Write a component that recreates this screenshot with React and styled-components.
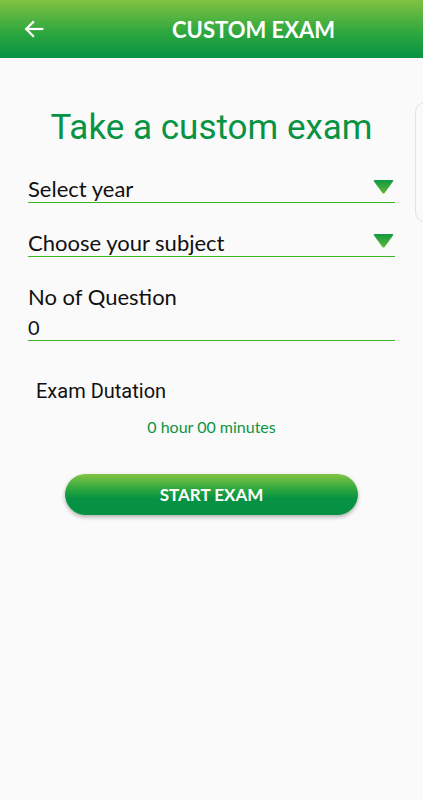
import styled, { createGlobalStyle } from "styled-components";

const GlobalStyle = createGlobalStyle`
  html, body {
    margin: 0;
    padding: 0;
    background: #fafafa;
  }
  body {
    font-family: Lato, "Noto Sans", sans-serif;
  }
`;

const Page = styled.div`
  position: relative;
  width: 423px;
  min-height: 800px;
  background: #fafafa;
  overflow: hidden;
`;

const Toolbar = styled.header`
  height: 58px;
  display: flex;
  align-items: center;
  background: linear-gradient(to bottom, #80c241 0%, #2fa83f 55%, #069243 100%);
  color: #fff;
  padding: 0 0 0 22px;
`;

const BackButton = styled.button`
  border: 0;
  background: none;
  padding: 0;
  width: 24px;
  height: 24px;
  display: flex;
  align-items: center;
  justify-content: center;
  color: #fff;
`;

const ToolbarTitle = styled.h1`
  margin: 0 0 0 126px;
  font-family: Lato, sans-serif;
  font-weight: 700;
  font-size: 22px;
  color: #fff;
`;

const Content = styled.main`
  padding: 50px 28px 0 28px;
  display: flex;
  flex-direction: column;
`;

const Heading = styled.h2`
  margin: 0 0 20px;
  text-align: center;
  font-family: Roboto, sans-serif;
  font-weight: 400;
  font-size: 35px;
  line-height: 40px;
  color: #089344;
`;

const Select = styled.div`
  display: flex;
  align-items: flex-end;
  justify-content: space-between;
  height: 34px;
  border-bottom: 1px solid #3cb521;
  margin-bottom: 19px;
  font-size: 22px;
  color: #111;
`;

const SelectText = styled.span`
  line-height: 26px;
`;

const Caret = styled.svg`
  width: 21px;
  height: 14px;
  margin: 0 1px 8px 0;
`;

const FieldLabel = styled.div`
  font-size: 22px;
  line-height: 24px;
  color: #111;
  margin-top: 9px;
`;

const NumberInput = styled.div`
  font-size: 20px;
  line-height: 22px;
  padding-top: 7px;
  border-bottom: 1px solid #3cb521;
  color: #111;
  padding-bottom: 2px;
`;

const DurationLabel = styled.div`
  font-family: Roboto, sans-serif;
  font-size: 20px;
  line-height: 22px;
  color: #111;
  margin: 39px 0 0 8px;
`;

const DurationValue = styled.div`
  text-align: center;
  font-size: 16px;
  color: #0a9444;
  margin-top: 15px;
  line-height: 20px;
`;

const StartButton = styled.button`
  align-self: center;
  margin-top: 37px;
  width: 293px;
  height: 41px;
  border: 0;
  border-radius: 21px;
  background: linear-gradient(to bottom, #82c442 0%, #26a53e 40%, #079243 60%, #079243 100%);
  box-shadow: 0 2px 4px rgba(0, 0, 0, 0.3);
  color: #fff;
  font-family: Lato, sans-serif;
  font-weight: 700;
  font-size: 17px;
`;

const SideCard = styled.div`
  position: absolute;
  top: 102px;
  left: 415px;
  width: 60px;
  height: 118px;
  border: 1px solid #e2e2e2;
  border-radius: 10px;
  background: #fafafa;
`;

function DropCaret() {
  return (
    <Caret viewBox="0 0 21 14">
      <defs>
        <linearGradient id="caretFill" x1="0" y1="0" x2="0" y2="1">
          <stop offset="0" stopColor="#129744" />
          <stop offset="1" stopColor="#5fb832" />
        </linearGradient>
      </defs>
      <path d="M1 1.5 Q0 0 2 0 H19 Q21 0 20 1.5 L11.6 13 Q10.5 14.2 9.4 13 Z" fill="url(#caretFill)" />
    </Caret>
  );
}

export default function App() {
  return (
    <>
      <GlobalStyle />
      <Page>
        <Toolbar>
          <BackButton aria-label="Back">
            <svg width="22" height="22" viewBox="0 0 24 24" fill="none" stroke="#fff" strokeWidth="2.4" strokeLinecap="square">
              <path d="M21 12H4" />
              <path d="M11 4.5L3.5 12L11 19.5" />
            </svg>
          </BackButton>
          <ToolbarTitle>CUSTOM EXAM</ToolbarTitle>
        </Toolbar>
        <Content>
          <Heading>Take a custom exam</Heading>
          <Select>
            <SelectText>Select year</SelectText>
            <DropCaret />
          </Select>
          <Select>
            <SelectText>Choose your subject</SelectText>
            <DropCaret />
          </Select>
          <FieldLabel>No of Question</FieldLabel>
          <NumberInput>0</NumberInput>
          <DurationLabel>Exam Dutation</DurationLabel>
          <DurationValue>0 hour 00 minutes</DurationValue>
          <StartButton>START EXAM</StartButton>
        </Content>
        <SideCard />
      </Page>
    </>
  );
}
